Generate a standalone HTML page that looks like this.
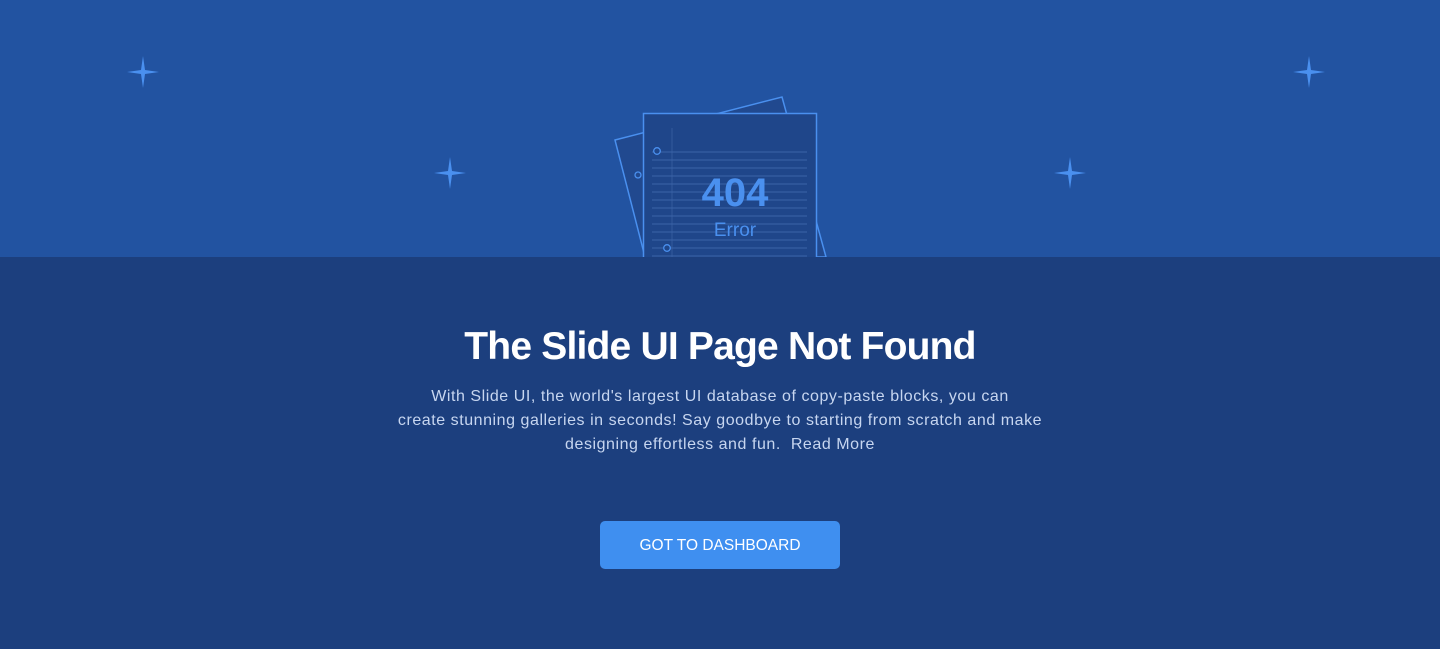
<!DOCTYPE html>
<html><head><style>
html,body{margin:0;padding:0}
body{width:1440px;height:649px;overflow:hidden;font-family:"Liberation Sans",sans-serif;background:#1c3f7e;position:relative}
.top{position:absolute;left:0;top:0;width:1440px;height:257px;background:#2253a1}
svg{position:absolute;left:0;top:0}
h1{position:absolute;top:323px;left:0;width:1440px;text-align:center;margin:0;color:#fff;font-size:39px;font-weight:bold;letter-spacing:-0.8px;line-height:48px}
p{position:absolute;top:385px;left:320px;width:800px;text-align:center;margin:0;color:#c7d6f0;font-size:16px;letter-spacing:0.55px;line-height:24px;white-space:nowrap}
.btn{position:absolute;left:600px;top:521px;width:240px;height:48px;background:#3f8ff0;border-radius:5px;color:#fff;font-size:15.5px;line-height:49px;text-align:center}
</style></head><body>
<div class="top"></div>
<svg width="1440" height="257" viewBox="0 0 1440 257">
<g fill="#4a90ef">
<path d="M143 56 L145 70 L159 72 L145 74 L143 88 L141 74 L127 72 L141 70Z"/>
<path d="M450 157 L452 171 L466 173 L452 175 L450 189 L448 175 L434 173 L448 171Z"/>
<path d="M1070 157 L1072 171 L1086 173 L1072 175 L1070 189 L1068 175 L1054 173 L1068 171Z"/>
<path d="M1309 56 L1311 70 L1325 72 L1311 74 L1309 88 L1307 74 L1293 72 L1307 70Z"/>
</g>
<polygon points="615,140 782,97 826,257 645,257" fill="#21498f" stroke="#4a90ef" stroke-width="1.5"/>
<circle cx="638" cy="175" r="3" fill="none" stroke="#4a90ef" stroke-width="1.3"/>
<rect x="643.5" y="113.5" width="173" height="150" fill="#1f468a" stroke="#4a90ef" stroke-width="1.5"/>
<line x1="672" y1="128" x2="672" y2="257" stroke="#335a9c" stroke-width="1"/>
<g stroke="#3b64a8" stroke-width="1">
<line x1="652" y1="152" x2="807" y2="152"/><line x1="652" y1="160" x2="807" y2="160"/><line x1="652" y1="168" x2="807" y2="168"/><line x1="652" y1="176" x2="807" y2="176"/><line x1="652" y1="184" x2="807" y2="184"/><line x1="652" y1="192" x2="807" y2="192"/><line x1="652" y1="200" x2="807" y2="200"/><line x1="652" y1="208" x2="807" y2="208"/><line x1="652" y1="216" x2="807" y2="216"/><line x1="652" y1="224" x2="807" y2="224"/><line x1="652" y1="232" x2="807" y2="232"/><line x1="652" y1="240" x2="807" y2="240"/><line x1="652" y1="248" x2="807" y2="248"/><line x1="652" y1="256" x2="807" y2="256"/>
</g>
<circle cx="657" cy="151" r="3.3" fill="#1f468a" stroke="#4a90ef" stroke-width="1.3"/>
<circle cx="667" cy="248" r="3.3" fill="#1f468a" stroke="#4a90ef" stroke-width="1.3"/>
<text x="735" y="206" text-anchor="middle" fill="#4a90ef" font-family="Liberation Sans" font-weight="bold" font-size="40">404</text>
<text x="735" y="236" text-anchor="middle" fill="#4a90ef" font-family="Liberation Sans" font-size="19">Error</text>
</svg>
<h1>The Slide UI Page Not Found</h1>
<p>With Slide UI, the world's largest UI database of copy-paste blocks, you can<br>create stunning galleries in seconds! Say goodbye to starting from scratch and make<br>designing effortless and fun.&nbsp; Read More</p>
<div class="btn">GOT TO DASHBOARD</div>
</body></html>
